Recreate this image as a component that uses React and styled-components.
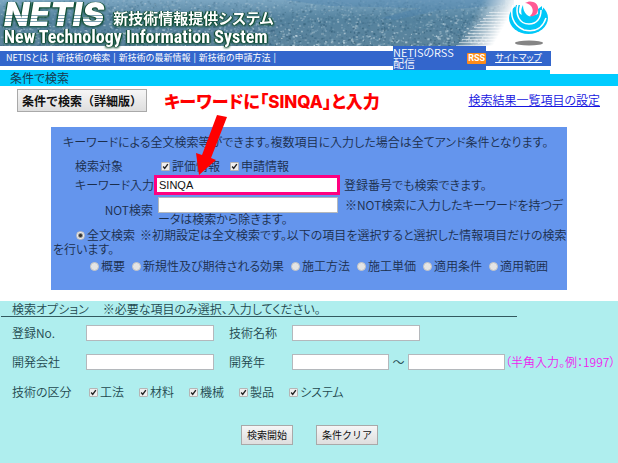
import React from "react";
import styled, { createGlobalStyle } from "styled-components";

const GlobalStyle = createGlobalStyle`
  *, *::before { box-sizing: border-box; }
  body {
    margin: 0;
    background: #afeeee;
    color: #2b4459;
    font-family: "Noto Sans CJK JP", sans-serif;
    font-size: 12px;
    font-weight: 350;
    line-height: 16px;
    font-feature-settings: "palt";
  }
  input, button { font: inherit; font-feature-settings: inherit; margin: 0; }
`;

const Page = styled.div`
  background: #fff;
`;

const Banner = styled.header`
  position: relative;
  display: flex;
  justify-content: space-between;
  height: 46px;
`;

const Photo = styled.svg`
  position: absolute;
  inset: 0;
  width: 100%;
  height: 46px;
`;

const Brand = styled.div`
  position: relative;
  padding-left: 4px;
  color: #fff;
  white-space: nowrap;
  filter: drop-shadow(1px 0 0 #0f4d33) drop-shadow(-1px 0 0 #0f4d33) drop-shadow(0 1px 1px #0f4d33);
`;

const BrandTop = styled.div`
  display: flex;
  align-items: flex-end;
  gap: 7px;
  height: 27px;
`;

const Acronym = styled.span`
  padding-right: 2px;
  background: linear-gradient(#fff 14px, #7fa3b4 14px 15px, #fff 15px 17px, #7fa3b4 17px 18px,
    #fff 18px 20px, #7fa3b4 20px 21px, #fff 21px);
  background-clip: text;
  color: transparent;
  font: italic 900 33px/26px Inter, sans-serif;
`;

const Slogan = styled.span`
  font-size: 15px;
  font-weight: 700;
  line-height: 18px;
`;

const EnglishName = styled.div`
  font: 700 18px/19px "Liberation Sans Narrow", "Roboto Condensed", Roboto, sans-serif;
`;

const Emblem = styled.svg`
  position: relative;
  width: 60px;
  height: 46px;
  margin-right: 58px;
`;

const NavRow = styled.div`
  display: grid;
  grid-template-columns: 393fr 93fr 65fr 67fr;
  align-items: start;
  height: 24px;
`;

const Nav = styled.nav`
  display: flex;
  height: 15px;
  margin-top: 5px;
  padding-left: 6px;
  background: #3366cc;
  color: #fff;
  font-size: 9px;
  font-weight: 400;
  line-height: 14px;
  white-space: nowrap;
`;

const NavLink = styled.a`
  color: #fff;
  text-decoration: none;
  &::after { content: "|"; margin: 0 3px; }
`;

const SiteMap = styled(Nav)`
  justify-content: center;
  padding: 0;
`;

const SiteMapLink = styled.a`
  color: #fff;
`;

const Feed = styled.a`
  display: flex;
  align-items: center;
  justify-content: space-between;
  height: 24px;
  background: #3366cc;
  color: #fff;
  font-size: 11px;
  line-height: 11px;
  text-decoration: none;
`;

const FeedLine = styled.span`
  display: block;
`;

const FeedBadge = styled.span`
  padding: 0 1px;
  border-radius: 1px;
  background: #ff8c1a;
  font: 700 9px/11px Roboto, sans-serif;
`;

const TitleBar = styled.h1`
  margin: 0;
  padding-left: 10px;
  background: linear-gradient(#fff, #fff) right top / 11% 4px no-repeat #00ccff;
  color: #173850;
  font-size: 12px;
  font-weight: 400;
  line-height: 16px;
`;

const Toolbar = styled.div`
  display: grid;
  grid-template-columns: 147px 1fr auto;
  align-items: start;
  height: 41px;
  padding: 3px 18px 0 17px;
`;

const PushButton = styled.button`
  justify-self: start;
  height: ${(p) => (p.$large ? 23 : 20)}px;
  padding: 0 ${(p) => (p.$large ? 4 : 5)}px;
  border: 1px solid #a9a9a9;
  background: linear-gradient(#f6f6f6, #dedede);
  color: #111;
  font-size: ${(p) => (p.$large ? 12 : 10)}px;
  font-weight: ${(p) => (p.$large ? 700 : 400)};
  font-feature-settings: normal;
  line-height: 16px;
  white-space: nowrap;
`;

const Callout = styled.strong`
  padding-top: 3px;
  color: #f00;
  font-family: Inter, "Noto Sans CJK JP", sans-serif;
  font-size: 17px;
  font-weight: 800;
  line-height: 20px;
  white-space: nowrap;
`;

const SettingsLink = styled.a`
  padding-top: 3px;
  color: #1414e0;
`;

const SearchPanel = styled.section`
  position: relative;
  margin: 0 51px;
  height: 163px;
  padding-top: 7px;
  background: #6495ed;
  color: #1b2e4c;
  white-space: nowrap;
`;

const Intro = styled.p`
  margin: 0 0 8px 12px;
`;

const Arrow = styled.svg`
  position: absolute;
  left: 139px;
  top: -17px;
  width: 50px;
  height: 70px;
  pointer-events: none;
`;

const FieldRow = styled.div`
  display: grid;
  grid-template-columns: 103px 1fr;
  align-items: start;
  height: ${(p) => p.$height}px;
`;

const FieldLabel = styled.label`
  justify-self: ${(p) => (p.$end ? "end" : "start")};
  padding: ${(p) => (p.$end ? "5px 1px 0 0" : "0 0 0 24px")};
`;

const Choices = styled.div`
  display: flex;
  gap: ${(p) => p.$gap}px;
  padding-left: ${(p) => p.$indent}px;
`;

const Choice = styled.label`
  display: flex;
  align-items: center;
  gap: 2px;
  white-space: nowrap;
`;

const Tick = styled.input`
  appearance: none;
  width: 9px;
  height: 9px;
  border: 1px solid #b5b5b5;
  border-radius: 1px;
  background: #eee;
  background-image: url("data:image/svg+xml,%3Csvg xmlns='http://www.w3.org/2000/svg' viewBox='0 0 9 9'%3E%3Cpath d='M1.5 4.5 3.5 7 7.5 1.5' fill='none' stroke='%23222' stroke-width='1.8'/%3E%3C/svg%3E");
`;

const Radio = styled.input`
  appearance: none;
  width: 9px;
  height: 9px;
  border: 1px solid #c4c4c4;
  border-radius: 50%;
  background: #e4e4e4;
  &:checked { background: radial-gradient(circle, #333 0 1px, #eee 3px); }
`;

const TextBox = styled.input`
  width: 100%;
  min-width: 0;
  height: 16px;
  padding: 0 2px;
  border: 1px solid #b4b8bc;
  border-radius: 0;
  background: #fff;
  color: #111;
`;

const KeywordBox = styled(TextBox)`
  height: 20px;
  margin-top: -2px;
  border: 3px solid #ff0080;
  font: 11px/14px "Liberation Sans", sans-serif;
`;

const NameBox = styled(TextBox)`
  width: 128px;
`;

const WithNote = styled.div`
  display: grid;
  grid-template-columns: ${(p) => (p.$keyword ? "186px" : "180px")} 1fr;
  column-gap: ${(p) => (p.$keyword ? 4 : 7)}px;
  margin-left: ${(p) => (p.$keyword ? 0 : 4)}px;
  align-content: start;
`;

const NoteTail = styled.span`
  grid-column: 1 / -1;
  line-height: 12px;
`;

const ScopeTail = styled.p`
  margin: 0 0 3px 2px;
  line-height: 12px;
`;

const Options = styled.section`
  margin-top: 11px;
  padding-bottom: 18px;
  background: #afeeee;
  color: #23484e;
  white-space: nowrap;
`;

const OptionsTitle = styled.h2`
  display: flex;
  gap: 14px;
  width: 516px;
  max-width: 100%;
  margin: 0 0 8px 1px;
  padding-left: 11px;
  border-bottom: 1px solid #32595f;
  font-size: 12px;
  font-weight: inherit;
  line-height: 15px;
`;

const OptionRow = styled.div`
  display: grid;
  grid-template-columns: 74px 128px 15px 63px 97px 19px 97px 1fr;
  height: ${(p) => p.$height || 29}px;
  margin-left: 12px;
`;

const Wide = styled.div`
  grid-column: span ${(p) => p.$span};
`;

const Tilde = styled.span`
  text-align: center;
`;

const Hint = styled.span`
  color: #ee22ee;
`;

const Actions = styled.div`
  display: flex;
  gap: 23px;
  padding: 12px 0 0 241px;
`;

const buildings = (() => {
  let seed = 17;
  const rnd = () => {
    seed = (seed * 16807) % 2147483647;
    return seed / 2147483647;
  };
  const tones = ["#c2d8e2", "#8fb3c6", "#36617e", "#2c566e", "#487a98", "#d5e3e8", "#5f8ca8"];
  return Array.from({ length: 4200 }, () => {
    const y = rnd() * 46;
    return {
      x: rnd() * 520,
      y,
      w: 1 + rnd() * 1.5,
      h: 1 + rnd(),
      fill: tones[Math.floor(rnd() * tones.length)],
      o: (0.2 + rnd() * 0.4) * (0.4 + y / 50),
    };
  });
})();

const CityPhoto = () => (
  <Photo viewBox="0 0 618 46" preserveAspectRatio="xMinYMin slice" aria-hidden="true">
    <defs>
      <linearGradient id="sky" x2="0" y2="1">
        <stop offset="0" stopColor="#7ba6c2" />
        <stop offset=".4" stopColor="#55839f" />
        <stop offset="1" stopColor="#5c849c" />
      </linearGradient>
      <linearGradient id="fade" gradientUnits="userSpaceOnUse" x1="474" y1="14" x2="502" y2="30">
        <stop offset="0" stopColor="#fff" stopOpacity="0" />
        <stop offset="1" stopColor="#fff" />
      </linearGradient>
    </defs>
    <rect width="520" height="46" fill="url(#sky)" />
    {buildings.map((b, i) => (
      <rect key={i} x={b.x} y={b.y} width={b.w} height={b.h} fill={b.fill} opacity={b.o} />
    ))}
    <path d="M285 0H505V5L440 10 395 20 380 18 420 8 330 6z" fill="#4d83ad" opacity=".45" />
    <path d="M440 0H618V46H440z" fill="url(#fade)" />
    {Array.from({ length: 12 }, (_, i) => (
      <rect key={i} x={489 - i * 3} y={12 + i * 3} width="120" height="1" fill="#fff" opacity=".5" />
    ))}
  </Photo>
);

const Check = ({ children }) => (
  <Choice>
    <Tick type="checkbox" defaultChecked />
    {children}
  </Choice>
);

const Pick = ({ children, ...rest }) => (
  <Choice>
    <Radio type="radio" name="scope" {...rest} />
    {children}
  </Choice>
);

export default function App() {
  return (
    <Page>
      <GlobalStyle />
      <Banner>
        <CityPhoto />
        <Brand>
          <BrandTop>
            <Acronym>NETIS</Acronym>
            <Slogan>新技術情報提供システム</Slogan>
          </BrandTop>
          <EnglishName>New Technology Information System</EnglishName>
        </Brand>
        <Emblem viewBox="0 0 60 46" aria-hidden="true">
          <ellipse cx="28.5" cy="18" rx="19.5" ry="16" fill="#00c8f8" />
          <path d="M14 0H43V9L38 14 28 17 20 14 14 5z" fill="#fff" />
          <path d="M13 5C10 14 12 25 24 30 36 33 43 27 46 18" fill="none" stroke="#fff" strokeWidth="1.5" />
          <path d="M16 5C12 16 18 27 29 27 38 27 43 20 42 6L38 9C39 17 34 22 28 22 21 21 17 15 20 5z" fill="#00c8f8" />
          <path d="M18 4C15 14 19 24 29 24 37 24 41 18 41 10" fill="none" stroke="#fff" strokeWidth="1.5" />
          <path d="M23 5C19 12 22 20 30 21 34 21 37 19 38 16 32 19 23 16 23 5z" fill="#00c8f8" />
          <path d="M25 3C31-1 39 3 38 9 38 15 33 17 30 16 35 12 33 4 25 3z" fill="#ff5a94" />
          <ellipse cx="29" cy="43" rx="14" ry="2.6" fill="#858585" />
        </Emblem>
      </Banner>

      <NavRow>
        <Nav>
          <NavLink href="#about">NETISとは</NavLink>
          <NavLink href="#search">新技術の検索</NavLink>
          <NavLink href="#news">新技術の最新情報</NavLink>
          <NavLink href="#apply">新技術の申請方法</NavLink>
        </Nav>
        <Feed href="#rss">
          <span>
            <FeedLine>NETISのRSS</FeedLine>
            <FeedLine>配信</FeedLine>
          </span>
          <FeedBadge>RSS</FeedBadge>
        </Feed>
        <SiteMap>
          <SiteMapLink href="#sitemap">サイトマップ</SiteMapLink>
        </SiteMap>
      </NavRow>

      <TitleBar>条件で検索</TitleBar>

      <Toolbar>
        <PushButton type="button" $large>条件で検索（詳細版）</PushButton>
        <Callout>キーワードに「SINQA」と入力</Callout>
        <SettingsLink href="#columns">検索結果一覧項目の設定</SettingsLink>
      </Toolbar>

      <SearchPanel>
        <Intro>キーワードによる全文検索等ができます。複数項目に入力した場合は全てアンド条件となります。</Intro>
        <FieldRow $height={19}>
          <FieldLabel as="span">検索対象</FieldLabel>
          <Choices $gap={10} $indent={7}>
            <Check>評価情報</Check>
            <Check>申請情報</Check>
          </Choices>
        </FieldRow>
        <FieldRow $height={20}>
          <FieldLabel htmlFor="keyword">キーワード入力</FieldLabel>
          <WithNote $keyword>
            <KeywordBox id="keyword" defaultValue="SINQA" />
            <span>登録番号でも検索できます。</span>
          </WithNote>
        </FieldRow>
        <FieldRow $height={30}>
          <FieldLabel htmlFor="exclude" $end>NOT検索</FieldLabel>
          <WithNote>
            <TextBox id="exclude" />
            <span>※NOT検索に入力したキーワードを持つデ</span>
            <NoteTail>ータは検索から除きます。</NoteTail>
          </WithNote>
        </FieldRow>
        <Choices $gap={5} $indent={25}>
          <Pick defaultChecked>全文検索</Pick>
          <span>※初期設定は全文検索です。以下の項目を選択すると選択した情報項目だけの検索</span>
        </Choices>
        <ScopeTail>を行います。</ScopeTail>
        <Choices $gap={7} $indent={39}>
          <Pick>概要</Pick>
          <Pick>新規性及び期待される効果</Pick>
          <Pick>施工方法</Pick>
          <Pick>施工単価</Pick>
          <Pick>適用条件</Pick>
          <Pick>適用範囲</Pick>
        </Choices>
        <Arrow viewBox="0 0 50 70" aria-hidden="true">
          <path d="M27 5 37 7 21 48 26 50 9 65 6 43 12 45z" fill="#f00" />
        </Arrow>
      </SearchPanel>

      <Options>
        <OptionsTitle>
          <span>検索オプション</span>
          <span>※必要な項目のみ選択、入力してください。</span>
        </OptionsTitle>
        <OptionRow>
          <label htmlFor="number">登録No.</label>
          <TextBox id="number" />
          <span />
          <label htmlFor="name">技術名称</label>
          <Wide $span={3}>
            <NameBox id="name" />
          </Wide>
        </OptionRow>
        <OptionRow $height={30}>
          <label htmlFor="company">開発会社</label>
          <TextBox id="company" />
          <span />
          <label htmlFor="year-from">開発年</label>
          <TextBox id="year-from" />
          <Tilde>～</Tilde>
          <TextBox aria-label="開発年（終了）" />
          <Hint>（半角入力。例：1997）</Hint>
        </OptionRow>
        <OptionRow>
          <span>技術の区分</span>
          <Wide $span={7}>
            <Choices $gap={15} $indent={3}>
              <Check>工法</Check>
              <Check>材料</Check>
              <Check>機械</Check>
              <Check>製品</Check>
              <Check>システム</Check>
            </Choices>
          </Wide>
        </OptionRow>
        <Actions>
          <PushButton type="button">検索開始</PushButton>
          <PushButton type="button">条件クリア</PushButton>
        </Actions>
      </Options>
    </Page>
  );
}
